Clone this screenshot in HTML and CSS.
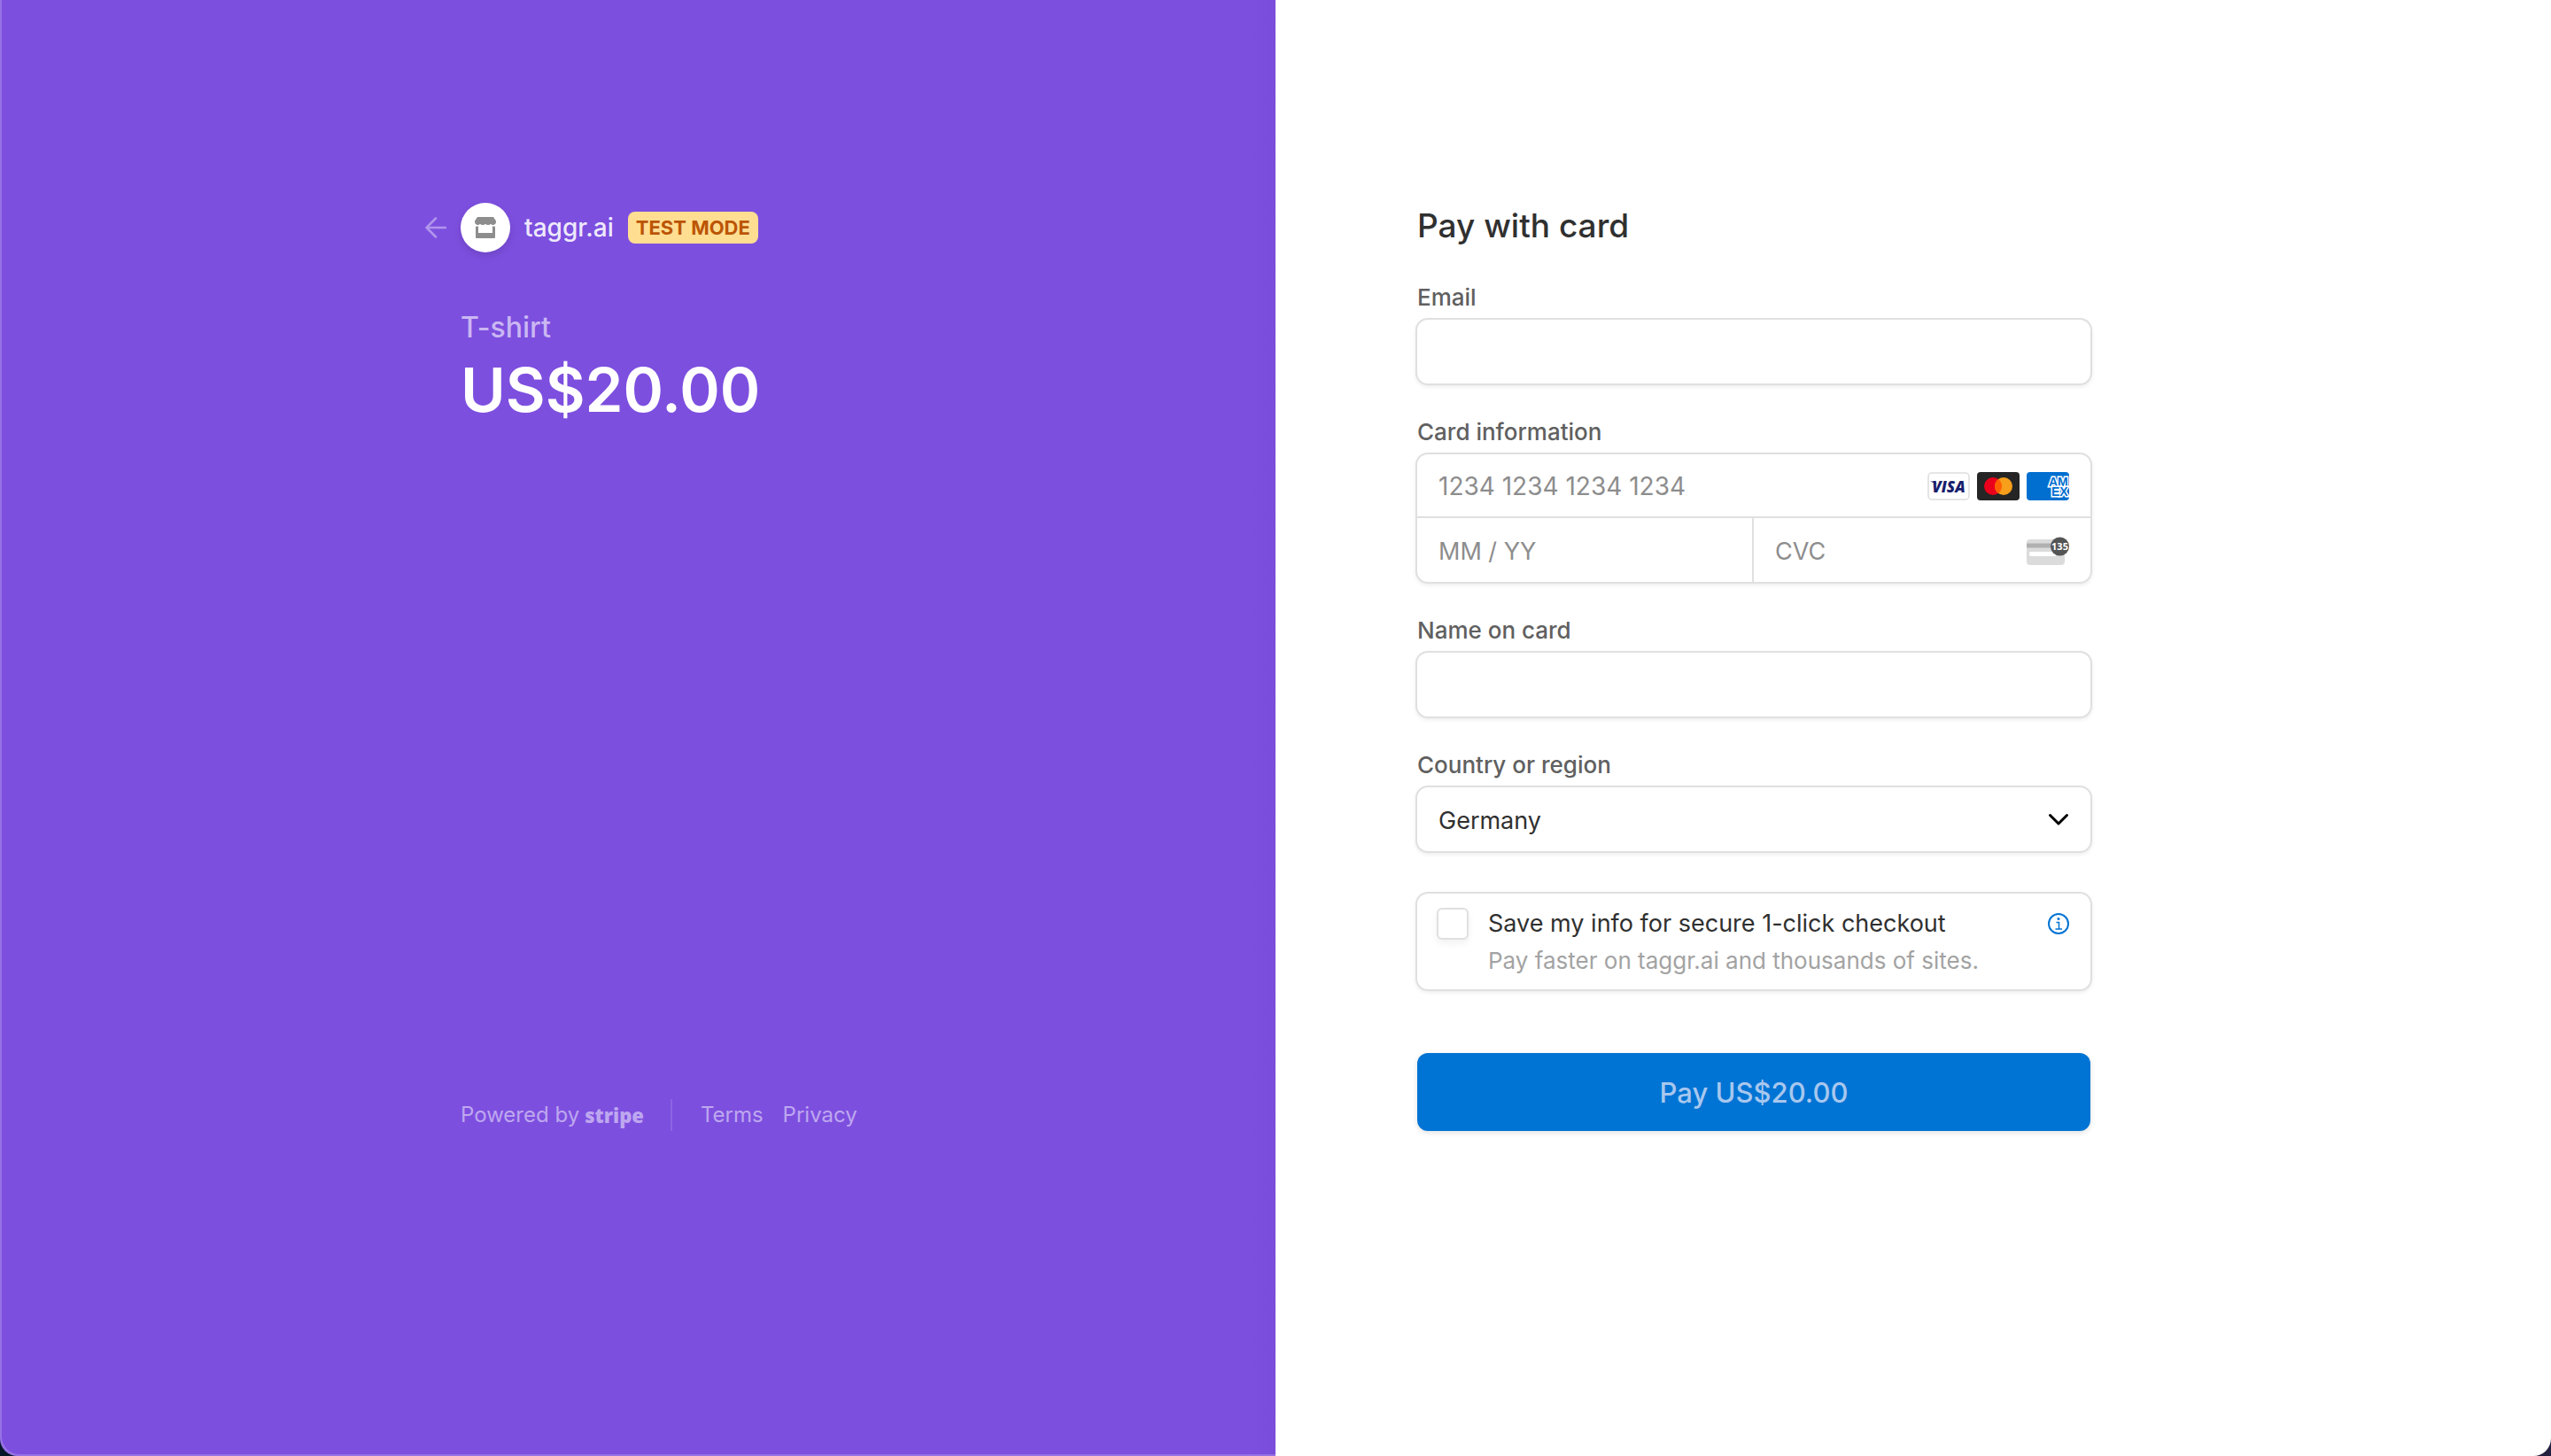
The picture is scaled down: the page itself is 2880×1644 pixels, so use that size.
FILE: index.html
```html
<!DOCTYPE html>
<html lang="en">
<head>
<meta charset="utf-8">
<meta name="viewport" content="width=device-width, initial-scale=1">
<title>taggr.ai checkout</title>
<link rel="stylesheet" href="styles.css">
</head>
<body>
<div class="page">
  <section class="overview">
    <div class="overview-inner">
      <header class="business">
        <a class="back" href="#" aria-label="Back to taggr.ai">
          <svg class="back-icon" viewBox="0 0 24 24" fill="none" stroke="currentColor" stroke-width="2.500" stroke-linecap="round" stroke-linejoin="round"><path d="M23 12H1.500M12 1.500 1.500 12 12 22.500"/></svg>
        </a>
        <span class="avatar">
          <svg class="shop-icon" viewBox="0 0 24 24" fill="currentColor"><path d="M3 0h18l3 4.500v1.200a3.400 3.400 0 0 1-6 2.100 3.600 3.600 0 0 1-3 1.300 3.600 3.600 0 0 1-3-1.300 3.600 3.600 0 0 1-3 1.300 3.600 3.600 0 0 1-3-1.300A3.400 3.400 0 0 1 0 5.700V4.500z"/><path d="M1 10.500c1.200.4 2.200.3 3-.2V18h16v-7.700c.8.5 1.800.6 3 .2V23a1 1 0 0 1-1 1H2a1 1 0 0 1-1-1z"/></svg>
        </span>
        <span class="business-name">taggr.ai</span>
        <span class="badge">TEST MODE</span>
      </header>
      <div class="product">
        <p class="product-name">T-shirt</p>
        <p class="product-price">US$20.00</p>
      </div>
      <footer class="footer">
        <a class="powered" href="#">Powered by <span class="stripe">stripe</span></a>
        <nav class="legal">
          <a href="#">Terms</a>
          <a href="#">Privacy</a>
        </nav>
      </footer>
    </div>
  </section>

  <main class="payment">
    <form class="form">
      <h1 class="title">Pay with card</h1>

      <div class="field">
        <label class="label" for="email">Email</label>
        <input class="box input" id="email" type="email">
      </div>

      <fieldset class="field">
        <legend class="label">Card information</legend>
        <div class="box card">
          <div class="cell cell-number">
            <input class="cell-input number-input" type="text" placeholder="1234 1234 1234 1234" aria-label="Card number">
            <div class="brands">
              <svg class="brand" viewBox="0 0 48 32" role="img" aria-label="Visa"><rect x="1" y="1" width="46" height="30" rx="4" fill="#fff" stroke="#ddd" stroke-width="1.500"/><text class="visa-text" x="24" y="23" text-anchor="middle">VISA</text><path d="M3 10.500h6l1.500 3z" fill="#171e6c"/></svg>
              <svg class="brand" viewBox="0 0 48 32" role="img" aria-label="Mastercard"><rect width="48" height="32" rx="4" fill="#252525"/><circle cx="18" cy="16" r="10" fill="#eb001b"/><circle cx="30" cy="16" r="10" fill="#f79e1b"/><path d="M24 8a10 10 0 0 1 0 16 10 10 0 0 1 0-16z" fill="#ff5f00"/></svg>
              <svg class="brand" viewBox="0 0 48 32" role="img" aria-label="American Express"><clipPath id="amex-clip"><rect width="48" height="32" rx="4"/></clipPath><g clip-path="url(#amex-clip)"><rect width="48" height="32" fill="#016fd0"/><text class="amex-text" x="25" y="16">AM</text><text class="amex-text" x="28" y="27">EX</text></g></svg>
            </div>
          </div>
          <div class="cell cell-expiry">
            <input class="cell-input" type="text" placeholder="MM / YY" aria-label="Expiration">
          </div>
          <div class="cell cell-cvc">
            <input class="cell-input" type="text" placeholder="CVC" aria-label="CVC">
            <svg class="brand" viewBox="0 0 48 32" aria-hidden="true"><rect y="3" width="43" height="29" rx="4" fill="#dbdbdb"/><path d="M0 7.500h30v5H0z" fill="#b0b0b0"/><rect x="3" y="17" width="31" height="5" rx="2" fill="#fff"/><circle cx="37.500" cy="11" r="10.500" fill="#555"/><text class="cvc-text" x="37.500" y="15" text-anchor="middle">135</text></svg>
          </div>
        </div>
      </fieldset>

      <div class="field">
        <label class="label" for="name">Name on card</label>
        <input class="box input" id="name" type="text">
      </div>

      <div class="field">
        <label class="label" for="country">Country or region</label>
        <div class="select-wrap">
          <select class="box input select" id="country"><option>Germany</option></select>
          <svg class="chevron" viewBox="0 0 24 24" fill="none" stroke="#000" stroke-width="3" stroke-linecap="round" stroke-linejoin="round"><path d="M2.500 7.500l9.500 9.500 9.500-9.500"/></svg>
        </div>
      </div>

      <div class="box save">
        <input class="check" id="save" type="checkbox">
        <div class="save-text">
          <label class="save-title" for="save">Save my info for secure 1-click checkout</label>
          <p class="save-note">Pay faster on taggr.ai and thousands of sites.</p>
        </div>
        <button class="info" type="button" aria-label="More information">
          <svg class="info-icon" viewBox="0 0 24 24" fill="none" stroke="currentColor" stroke-width="2"><circle cx="12" cy="12" r="11"/><path stroke-width="1.500" d="M9.500 10.500h3V18M8.500 18h7.500"/><circle cx="12" cy="6.500" r="1.500" fill="currentColor" stroke="none"/></svg>
        </button>
      </div>

      <button class="pay" type="submit">Pay US$20.00</button>
    </form>
  </main>
</div>
</body>
</html>
```

FILE: styles.css
```css
* {
  box-sizing: border-box;
}

body {
  margin: 0;
  background: linear-gradient(90deg, #08182b, #24203f);
  font-family: Inter, "Liberation Sans", sans-serif;
  color: #303030;
}

p,
h1,
fieldset {
  margin: 0;
  padding: 0;
  border: 0;
}

a {
  color: inherit;
  text-decoration: none;
}

input,
select,
button {
  font: inherit;
}

.page {
  display: grid;
  grid-template-columns: 1fr 1fr;
  align-content: start;
  min-height: 100vh;
  padding: 229px 0 120px;
  border-radius: 0 0 20px 20px;
  background: linear-gradient(90deg, #7d4fdf 49%, #7a4ddb 50%, #fff 50%);
  box-shadow: inset 2px -2px 0 rgba(255, 255, 255, 0.2);
}

.overview {
  display: flex;
  justify-content: flex-end;
  padding: 0 160px 0 40px;
}

.overview-inner {
  display: flex;
  flex-direction: column;
  flex: 0 1 760px;
}

.business {
  position: relative;
  display: flex;
  align-items: center;
  gap: 16px;
  color: rgba(255, 255, 255, 0.9);
}

.back {
  position: absolute;
  right: 100%;
  margin-right: 16px;
  color: rgba(255, 255, 255, 0.4);
}

.back-icon,
.shop-icon,
.info-icon {
  display: block;
  width: 24px;
  height: 24px;
}

.avatar {
  display: grid;
  place-items: center;
  width: 56px;
  height: 56px;
  border-radius: 50%;
  background: #fff;
  color: #8d8d8d;
  box-shadow: 0 4px 10px rgba(0, 0, 0, 0.12);
}

.business-name {
  font-size: 28px;
  font-weight: 500;
}

.badge {
  padding: 0 9px;
  border-radius: 8px;
  background: #ffde92;
  color: #bb5504;
  font-size: 22px;
  font-weight: 700;
  line-height: 36px;
}

.product {
  padding-top: 65px;
}

.product-name {
  color: rgba(255, 255, 255, 0.6);
  font-size: 32px;
  font-weight: 500;
  line-height: 40px;
}

.product-price {
  color: #fff;
  font-size: 69px;
  font-weight: 600;
  line-height: 100px;
}

.footer {
  display: flex;
  align-items: center;
  margin-top: auto;
  color: rgba(255, 255, 255, 0.5);
  font-size: 24px;
  line-height: 36px;
}

.powered {
  display: flex;
  gap: 6px;
}

.stripe {
  font-family: "Open Sans", sans-serif;
  font-size: 22px;
  font-weight: 800;
}

.legal {
  display: flex;
  gap: 22px;
  margin-left: 30px;
  padding-left: 32px;
  border-left: 2px solid rgba(255, 255, 255, 0.12);
}

.payment {
  padding: 0 40px 0 158px;
}

.form {
  display: flex;
  flex-direction: column;
  max-width: 764px;
}

.title {
  margin-bottom: 2px;
  padding-left: 2px;
  font-size: 37px;
  font-weight: 500;
  line-height: 52px;
}

.field {
  min-width: 0;
  margin-top: 36px;
}

.label {
  display: block;
  margin-bottom: 6px;
  padding: 0 2px;
  color: #606060;
  font-size: 26px;
  font-weight: 500;
  line-height: 34px;
}

.box {
  display: block;
  width: 100%;
  border: 2px solid #e0e0e0;
  border-radius: 14px;
  background: #fff;
  box-shadow: 0 2px 4px rgba(0, 0, 0, 0.07);
}

.input {
  height: 76px;
  padding: 2px 24px 0;
  color: #303030;
  font-size: 27px;
}

.card {
  display: grid;
  grid-template-columns: minmax(0, 1fr) minmax(0, 1fr);
}

.cell {
  display: flex;
  align-items: center;
  height: 72px;
  padding: 2px 24px 0;
}

.cell-number {
  grid-column: 1 / -1;
  border-bottom: 2px solid #e0e0e0;
}

.cell-expiry {
  border-right: 2px solid #e0e0e0;
}

.cell-input {
  flex: 1;
  min-width: 0;
  padding: 0;
  border: 0;
  background: none;
  color: #303030;
  font-size: 27px;
}

.number-input {
  font-size: 28px;
}

.cell-input::placeholder {
  color: #8d8d8d;
  opacity: 1;
}

.brands {
  display: flex;
  gap: 8px;
}

.brand {
  display: block;
  flex: none;
  width: 48px;
  height: 32px;
}

.visa-text {
  fill: #171e6c;
  font: italic 800 17px "Open Sans", sans-serif;
}

.amex-text {
  fill: #016fd0;
  stroke: #fff;
  stroke-width: 3px;
  paint-order: stroke;
  font: 700 14px "Liberation Sans", sans-serif;
}

.cvc-text {
  fill: #fff;
  font: 700 11px "Open Sans", sans-serif;
}

.select-wrap {
  position: relative;
}

.select {
  appearance: none;
}

.chevron {
  position: absolute;
  top: 26px;
  right: 26px;
  width: 24px;
  height: 24px;
  pointer-events: none;
}

.save {
  display: flex;
  align-items: flex-start;
  margin-top: 44px;
  padding: 16px 24px 14px 22px;
}

.check {
  appearance: none;
  flex: none;
  width: 36px;
  height: 36px;
  margin: 0;
  border: 2px solid #e0e0e0;
  border-radius: 6px;
  background: #fff;
  box-shadow: 0 4px 8px rgba(0, 0, 0, 0.06);
}

.save-text {
  flex: 1;
  margin-left: 22px;
}

.save-title {
  display: block;
  font-size: 27px;
  line-height: 36px;
}

.save-note {
  padding-top: 6px;
  color: #a3a3a3;
  font-size: 26px;
  line-height: 36px;
}

.info {
  margin: 6px 0 0;
  padding: 0;
  border: 0;
  background: none;
  color: #0074d4;
}

.pay {
  height: 88px;
  margin: 70px 2px 0;
  border: 0;
  border-radius: 12px;
  background: #0074d4;
  box-shadow: 0 2px 6px rgba(0, 0, 0, 0.12);
  color: #a8c7ee;
  font-size: 31px;
  font-weight: 500;
}
```
